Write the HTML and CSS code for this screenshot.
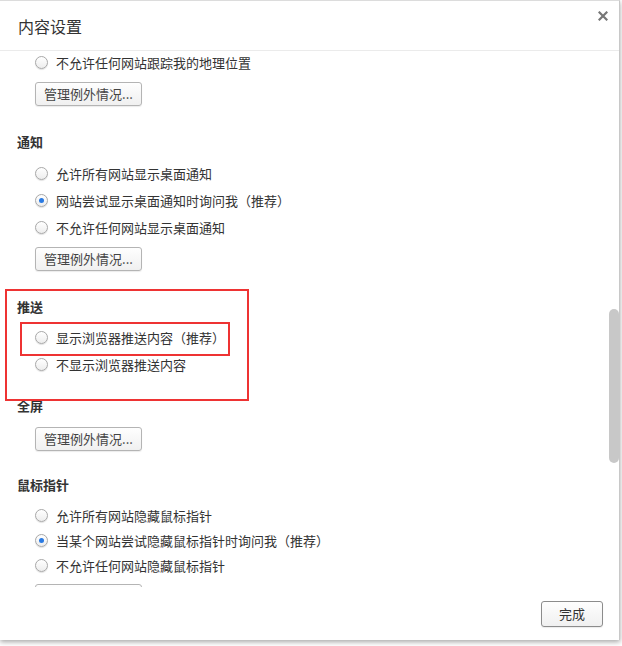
FILE: index.html
```html
<!DOCTYPE html>
<html lang="zh-CN">
<head>
<meta charset="utf-8">
<title>内容设置</title>
<link rel="stylesheet" href="styles.css">
</head>
<body>
<div class="dialog">
  <div class="header">
    <h1 class="title">内容设置</h1>
    <svg class="close" width="10" height="10" viewBox="0 0 10 10"><path d="M1.5 1.5L8.5 8.5M8.5 1.5L1.5 8.5" stroke="#777" stroke-width="2.2" stroke-linecap="square"/></svg>
  </div>
  <div class="content">
    <div class="inner">
      <div class="radios r-first">
        <div class="row"><span class="radio"></span><span>不允许任何网站跟踪我的地理位置</span></div>
      </div>
      <button class="btn b1">管理例外情况...</button>

      <h2 class="heading h-notify">通知</h2>
      <div class="radios r-notify">
        <div class="row"><span class="radio"></span><span>允许所有网站显示桌面通知</span></div>
        <div class="row"><span class="radio checked"></span><span>网站尝试显示桌面通知时询问我（推荐）</span></div>
        <div class="row"><span class="radio"></span><span>不允许任何网站显示桌面通知</span></div>
      </div>
      <button class="btn b2">管理例外情况...</button>

      <h2 class="heading h-push">推送</h2>
      <div class="radios r-push">
        <div class="row"><span class="radio"></span><span>显示浏览器推送内容（推荐）</span></div>
        <div class="row"><span class="radio"></span><span>不显示浏览器推送内容</span></div>
      </div>

      <h2 class="heading h-full">全屏</h2>
      <button class="btn b3">管理例外情况...</button>

      <h2 class="heading h-mouse">鼠标指针</h2>
      <div class="radios r-mouse">
        <div class="row"><span class="radio"></span><span>允许所有网站隐藏鼠标指针</span></div>
        <div class="row"><span class="radio checked"></span><span>当某个网站尝试隐藏鼠标指针时询问我（推荐）</span></div>
        <div class="row"><span class="radio"></span><span>不允许任何网站隐藏鼠标指针</span></div>
      </div>
      <button class="btn b4">管理例外情况...</button>
    </div>
  </div>
  <div class="footer">
    <button class="btn done">完成</button>
  </div>
  <div class="scroll-thumb"></div>
  <div class="mark mark-outer"></div>
  <div class="mark mark-inner"></div>
</div>
</body>
</html>
```
FILE: styles.css
```css
html, body {
  margin: 0;
  padding: 0;
}
body {
  width: 622px;
  height: 646px;
  background: #ffffff;
  font-family: "Noto Sans CJK SC", "Microsoft YaHei", sans-serif;
  color: #333;
  overflow: hidden;
}
.dialog {
  position: relative;
  width: 620px;
  height: 640px;
  box-sizing: border-box;
  background: #fff;
  border-top: 1px solid #dcdcdc;
  border-right: 1px solid #c8c8c8;
  box-shadow: 0 2px 5px rgba(0,0,0,0.35);
  display: flex;
  flex-direction: column;
}
.header {
  flex: none;
  border-bottom: 1px solid #ebebeb;
  display: flex;
  align-items: flex-start;
  justify-content: space-between;
  box-sizing: border-box;
  height: 50px;
}
.title {
  margin: 15px 0 0 18px;
  font-size: 16px;
  line-height: 20px;
  font-weight: normal;
  color: #333;
}
.close {
  margin: 10px 11px 0 0;
}
.content {
  flex: none;
  height: 536px;
  overflow: hidden;
}
.inner {
  padding-left: 17px;
  display: flex;
  flex-direction: column;
  align-items: flex-start;
}
.heading {
  margin: 0;
  font-size: 13px;
  line-height: 20px;
  font-weight: bold;
  color: #333;
}
.radios {
  margin-left: 18px;
  display: flex;
  flex-direction: column;
}
.row {
  height: 27px;
  display: flex;
  align-items: center;
  font-size: 13px;
  color: #333;
}
.r-mouse .row { height: 25px; }
.radio {
  width: 11px;
  height: 11px;
  border: 1px solid #a8a8a8;
  border-radius: 50%;
  background: linear-gradient(#ffffff, #ededed);
  box-shadow: 0 1px 1px rgba(0,0,0,0.12);
  margin-right: 8px;
  position: relative;
  flex: none;
}
.radio.checked::after {
  content: "";
  position: absolute;
  left: 3px;
  top: 3px;
  width: 5px;
  height: 5px;
  border-radius: 50%;
  background: #2a7ae2;
}
.btn {
  font-family: "Noto Sans CJK SC", "Microsoft YaHei", sans-serif;
  font-size: 13px;
  color: #444;
  height: 24px;
  width: 107px;
  padding: 0;
  border: 1px solid #b4b4b4;
  border-radius: 3px;
  background: linear-gradient(#fefefe, #f0f0f0);
  box-shadow: 0 1px 1px rgba(0,0,0,0.08);
  margin-left: 18px;
  line-height: 22px;
}
.r-first { margin-top: -2px; }
.b1 { margin-top: 6px; }
.h-notify { margin-top: 26px; }
.r-notify { margin-top: 8px; }
.b2 { margin-top: 6px; }
.h-push { margin-top: 26px; }
.r-push { margin-top: 7px; }
.h-full { margin-top: 18px; }
.b3 { margin-top: 11px; }
.h-mouse { margin-top: 24px; }
.r-mouse { margin-top: 8px; }
.b4 { margin-top: 6px; }

.footer {
  flex: 1;
  display: flex;
  justify-content: flex-end;
  align-items: flex-start;
  padding: 14px 16px 0 0;
  background: #fff;
}
.done {
  width: 62px;
  height: 26px;
  margin: 0;
  border-color: #8c8c8c;
  color: #333;
}
.scroll-thumb {
  position: absolute;
  left: 609px;
  top: 308px;
  width: 10px;
  height: 154px;
  border-radius: 5px;
  background: #c8c8c8;
}
.mark {
  position: absolute;
  border: 2px solid #ee3333;
  box-sizing: border-box;
}
.mark-outer {
  left: 5px;
  top: 288px;
  width: 244px;
  height: 112px;
}
.mark-inner {
  left: 20px;
  top: 321px;
  width: 210px;
  height: 34px;
}
```
